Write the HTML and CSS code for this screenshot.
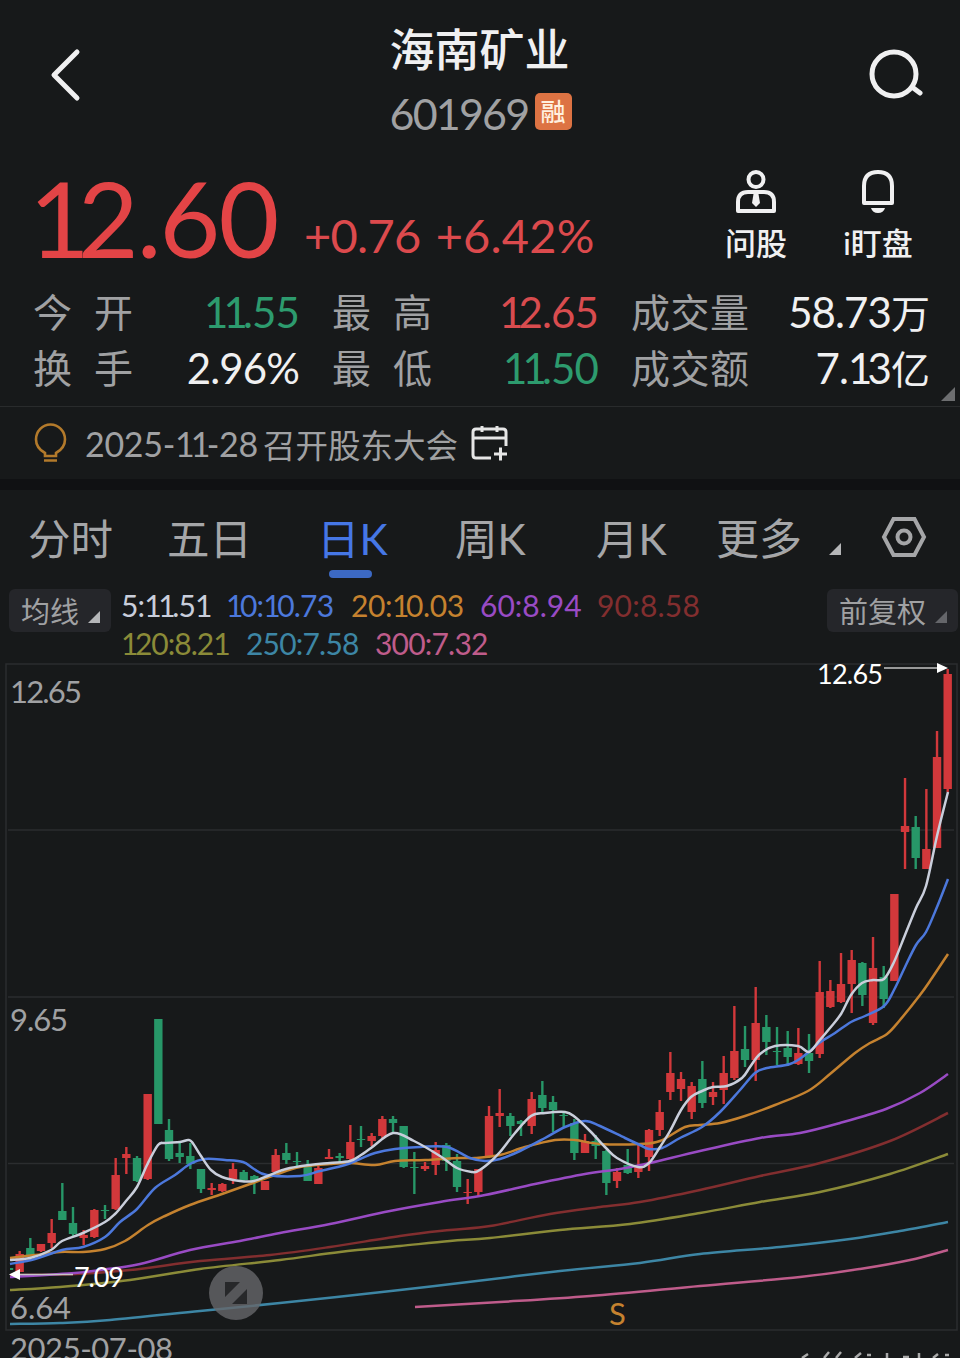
FILE: index.html
```html
<!DOCTYPE html>
<html lang="zh-CN">
<head>
    <meta charset="UTF-8">
    <meta name="viewport" content="width=device-width, initial-scale=1.0">
    <title>海南矿业 601969</title>
    <link rel="stylesheet" href="styles.css">
</head>
<body>

    <header class="header">
        <svg class="back" width="40" height="60" viewBox="0 0 40 60"><path d="M31 7 L8 30 L31 53"/></svg>
        <div class="stock">
            <h1>海南矿业</h1>
            <div class="code"><span class="code-num">601969</span><span class="badge">融</span></div>
        </div>
        <svg class="search" width="60" height="56" viewBox="0 0 60 56"><circle cx="27" cy="27" r="22"/><path d="M45 40 L53 46"/></svg>
    </header>

    <section class="quote">
        <div class="price"><span class="one">1</span>2.60</div>
        <div class="change"><span>+0.76</span><span class="pct">+6.42%</span></div>
        <div class="actions">
            <div class="action">
                <svg width="46" height="46" viewBox="0 0 46 46">
                    <circle cx="23" cy="11.5" r="7.5"/>
                    <path d="M5 43 V34 Q5 24 15 24 H31 Q41 24 41 34 V43 Z"/>
                    <path class="solid" d="M20.5 26 H25.5 L27 35 L23 39 L19 35 Z"/>
                </svg>
                <span>问股</span>
            </div>
            <div class="action">
                <svg width="46" height="46" viewBox="0 0 46 46">
                    <path d="M9 35 V18 Q9 4 23 4 Q37 4 37 18 V35 Z"/>
                    <path class="solid" d="M16 40 H30 Q28.5 45 23 45 Q17.5 45 16 40 Z"/>
                </svg>
                <span>i盯盘</span>
            </div>
        </div>
    </section>

    <section class="stats">
        <div class="label"><i>今</i><i>开</i></div>
        <div class="value down"><span class="one">11</span>.55</div>
        <div class="label"><i>最</i><i>高</i></div>
        <div class="value up"><span class="one">1</span>2.65</div>
        <div class="label"><i>成</i><i>交</i><i>量</i></div>
        <div class="value last">58.73<i>万</i></div>
        <div class="label"><i>换</i><i>手</i></div>
        <div class="value">2.96%</div>
        <div class="label"><i>最</i><i>低</i></div>
        <div class="value down"><span class="one">11</span>.50</div>
        <div class="label"><i>成</i><i>交</i><i>额</i></div>
        <div class="value last">7.<span class="one">1</span>3<i>亿</i></div>
        <span class="corner"></span>
    </section>

    <section class="notice">
        <svg class="bulb" width="34" height="42" viewBox="0 0 34 42"><path d="M11 34 V31 Q2 26 2 17.5 A14.5 15 0 0 1 31 17.5 Q31 26 22 31 V34 Z M10 38.5 H23"/></svg>
        <span class="date">2025-<span class="one">11</span>-28</span>
        <span class="event">召开股东大会</span>
        <svg class="calendar" width="38" height="38" viewBox="0 0 38 38"><path d="M20 34 H5 Q2 34 2 31 V8 Q2 5 5 5 H32 Q35 5 35 8 V22 M2 14 H35 M11 2 V8 M26 2 V8 M23 30 H36 M29.5 23.5 V36.5"/></svg>
    </section>

    <nav class="tabs">
        <span>分时</span>
        <span>五日</span>
        <span class="active">日K</span>
        <span>周K</span>
        <span>月K</span>
        <span class="more">更多</span>
        <svg class="settings" width="46" height="42" viewBox="0 0 46 42"><path d="M12.5 3 H33.5 L43 21 L33.5 39 H12.5 L3 21 Z"/><circle cx="23" cy="21" r="6.5"/></svg>
    </nav>

    <section class="legend">
        <div class="pill">均线</div>
        <div class="averages">
            <div class="line">
                <span class="ma5">5:<span class="one">11</span>.51</span>
                <span class="ma10"><span class="one">1</span>0:<span class="one">1</span>0.73</span>
                <span class="ma20">20:<span class="one">1</span>0.03</span>
                <span class="ma60">60:8.94</span>
                <span class="ma90">90:8.58</span>
            </div>
            <div class="line">
                <span class="ma120"><span class="one">1</span>20:8.21</span>
                <span class="ma250">250:7.58</span>
                <span class="ma300">300:7.32</span>
            </div>
        </div>
        <div class="pill adjust">前复权</div>
    </section>

    <svg class="chart" viewBox="0 662 960 696" width="960" height="696">
        <path class="frame" d="M6 1330 V664 H957 V1330 Z"/>
        <path class="grid" d="M8 830 H954 M8 997 H954 M8 1163.5 H954"/>
        <g id="candles"></g>
        <g id="lines"></g>

        <text class="axis" x="10" y="703" textLength="72">12.65</text>
        <text class="axis" x="10" y="1031" textLength="58">9.65</text>
        <text class="axis" x="10" y="1319" textLength="61">6.64</text>
        <text class="axis" x="10" y="1360" textLength="163">2025-07-08</text>

        <path class="arrow-line" d="M884 668 H938"/>
        <path class="arrow" d="M937 663 L948 668 L937 673 Z"/>
        <text class="mark" x="817" y="684" textLength="66">12.65</text>
        <path class="arrow-line" d="M19 1274.5 H73"/>
        <path class="arrow" d="M20 1269 L9 1274.5 L20 1280 Z"/>
        <text class="mark" x="74" y="1287" textLength="50">7.09</text>

        <circle class="expand" cx="236" cy="1293" r="27"/>
        <path class="expand-icon" d="M225 1282 H240 L225 1297 Z M247 1304 H232 L247 1289 Z"/>
        <text class="signal" x="609" y="1325">S</text>
        <path class="cut-mark" d="M802 1358 L808 1354 M824 1358 L829 1352 M836 1358 L841 1352 M855 1358 L861 1353 M867 1355 H871 M887 1353 V1358 M903 1357 H909 M919 1353 V1358 M933 1358 L938 1354 M945 1355 H949"/>
    </svg>

    <script>
        const NS = 'http://www.w3.org/2000/svg';
        const FIRST_X = 9;
        const STEP = 10.667;

        // one row per day: direction, wick top, body top, body bottom, wick bottom
        const candles = [
            ['g', 1267, 1268, 1270, 1271], ['r', 1251, 1254, 1272, 1272], ['g', 1238, 1248, 1256, 1257], ['r', 1244, 1244, 1251, 1252],
            ['r', 1219, 1233, 1243, 1248], ['g', 1183, 1211, 1220, 1220], ['g', 1207, 1223, 1234, 1236], ['r', 1230, 1235, 1238, 1245],
            ['r', 1209, 1210, 1237, 1238], ['g', 1205, 1210, 1211, 1219], ['r', 1158, 1175, 1209, 1210], ['r', 1147, 1154, 1158, 1174],
            ['g', 1156, 1158, 1181, 1182], ['r', 1094, 1094, 1179, 1180], ['g', 1019, 1019, 1124, 1124], ['g', 1119, 1130, 1159, 1161],
            ['g', 1143, 1153, 1157, 1163], ['g', 1143, 1156, 1164, 1169], ['g', 1169, 1169, 1189, 1193], ['r', 1183, 1188, 1190, 1195],
            ['r', 1183, 1184, 1191, 1192], ['r', 1163, 1169, 1179, 1184], ['g', 1170, 1172, 1180, 1182], ['g', 1175, 1176, 1182, 1194],
            ['r', 1181, 1181, 1190, 1190], ['r', 1149, 1155, 1172, 1173], ['g', 1143, 1153, 1160, 1164], ['g', 1152, 1161, 1162, 1166],
            ['g', 1160, 1165, 1181, 1181], ['r', 1165, 1168, 1184, 1184], ['r', 1149, 1157, 1159, 1159], ['g', 1153, 1156, 1158, 1163],
            ['r', 1125, 1142, 1159, 1160], ['g', 1126, 1139, 1140, 1147], ['r', 1133, 1136, 1141, 1146], ['r', 1116, 1119, 1136, 1138],
            ['g', 1116, 1119, 1123, 1133], ['g', 1126, 1126, 1167, 1168], ['g', 1152, 1167, 1168, 1194], ['r', 1162, 1166, 1169, 1171],
            ['r', 1142, 1150, 1165, 1175], ['g', 1143, 1145, 1161, 1171], ['g', 1154, 1161, 1187, 1192], ['r', 1179, 1192, 1193, 1204],
            ['r', 1169, 1169, 1192, 1196], ['r', 1106, 1116, 1156, 1158], ['r', 1089, 1113, 1116, 1127], ['g', 1113, 1116, 1126, 1136],
            ['g', 1120, 1121, 1124, 1136], ['r', 1092, 1099, 1126, 1134], ['g', 1081, 1095, 1108, 1113], ['g', 1096, 1102, 1110, 1132],
            ['g', 1112, 1115, 1116, 1127], ['g', 1119, 1123, 1153, 1160], ['r', 1134, 1141, 1153, 1153], ['g', 1135, 1141, 1146, 1159],
            ['g', 1150, 1151, 1183, 1195], ['r', 1168, 1172, 1181, 1188], ['g', 1149, 1165, 1173, 1174], ['r', 1145, 1166, 1172, 1178],
            ['r', 1129, 1130, 1157, 1171], ['r', 1100, 1112, 1130, 1136], ['r', 1052, 1073, 1092, 1100], ['r', 1072, 1079, 1089, 1101],
            ['r', 1082, 1086, 1112, 1119], ['g', 1061, 1079, 1103, 1108], ['r', 1082, 1092, 1097, 1105], ['r', 1056, 1073, 1090, 1104],
            ['r', 1006, 1051, 1078, 1080], ['g', 1026, 1049, 1060, 1067], ['r', 987, 1023, 1060, 1081], ['g', 1015, 1027, 1042, 1055],
            ['g', 1027, 1051, 1052, 1065], ['g', 1031, 1048, 1057, 1066], ['r', 1028, 1053, 1064, 1065], ['g', 1034, 1053, 1061, 1073],
            ['r', 961, 992, 1054, 1058], ['r', 980, 991, 1007, 1008], ['r', 953, 984, 1002, 1003], ['r', 950, 960, 984, 1013],
            ['g', 962, 963, 995, 1006], ['r', 937, 968, 1023, 1025], ['g', 966, 977, 999, 1008], ['r', 894, 894, 981, 981],
            ['r', 778, 826, 832, 869], ['g', 816, 827, 858, 869], ['r', 789, 849, 869, 869], ['r', 731, 757, 848, 848],
            ['r', 669, 674, 789, 792]
        ];

        const averages = {
            ma300: [[415,1307],[500,1302],[590,1296],[700,1286],[800,1277],[860,1269],[910,1260],[948,1250]],
            ma250: [[10,1324],[60,1323],[110,1320],[200,1311],[280,1303],[400,1290],[460,1283],[560,1271],[640,1263],[700,1254],[780,1247],[850,1239],[900,1231],[948,1222]],
            ma120: [[10,1290],[60,1287],[130,1280],[200,1269],[280,1260],[340,1252],[400,1246],[450,1241],[490,1238],[560,1230],[630,1224],[700,1213],[760,1202],[820,1192],[890,1174],[948,1154]],
            ma90: [[10,1275],[75,1274],[130,1270],[200,1261],[270,1255],[330,1247],[400,1236],[450,1230],[490,1226],[550,1214],[600,1207],[640,1202],[700,1190],[760,1176],[820,1163],[890,1141],[948,1113]],
            ma60: [[10,1277],[75,1273],[100,1270],[140,1264],[190,1250],[240,1241],[280,1233],[330,1224],[390,1211],[440,1202],[485,1195],[535,1184],[585,1174],[620,1169],[650,1163],[700,1151],[760,1138],[800,1133],[840,1123],[886,1109],[920,1093],[948,1074]],
            ma20: [[10,1258],[35,1255],[60,1252],[83,1252],[105,1249],[125,1241],[148,1225],[165,1216],[190,1205],[222,1194],[250,1184],[275,1175],[300,1167],[330,1164],[350,1163],[375,1165],[395,1161],[425,1160],[460,1158],[475,1158],[500,1155],[525,1147],[555,1140],[575,1140],[600,1144],[640,1144],[660,1141],[685,1127],[700,1125],[720,1123],[745,1116],[775,1105],[808,1091],[830,1074],[855,1053],[870,1043],[887,1034],[900,1020],[920,995],[932,978],[948,954]],
            ma10: [[10,1264],[35,1259],[62,1250],[83,1247],[105,1237],[120,1222],[137,1209],[155,1188],[175,1175],[190,1164],[205,1159],[225,1160],[243,1162],[254,1169],[267,1175],[300,1176],[320,1171],[345,1165],[360,1159],[375,1153],[395,1149],[420,1147],[447,1147],[470,1158],[485,1161],[500,1159],[520,1151],[545,1138],[565,1127],[585,1121],[600,1126],[625,1138],[640,1145],[649,1149],[662,1148],[680,1138],[702,1127],[720,1112],[740,1090],[755,1073],[767,1068],[790,1064],[805,1055],[819,1043],[835,1033],[851,1022],[865,1016],[884,1006],[894,990],[905,967],[916,945],[926,932],[937,907],[948,879]],
            ma5: [[10,1260],[30,1258],[51,1250],[62,1241],[83,1233],[105,1222],[115,1214],[126,1201],[137,1187],[147,1165],[158,1145],[165,1143],[180,1142],[188,1140],[192,1142],[201,1156],[211,1170],[222,1177],[240,1181],[254,1181],[270,1175],[286,1169],[310,1165],[330,1163],[350,1161],[361,1155],[371,1148],[393,1133],[414,1141],[440,1156],[457,1168],[472,1172],[478,1171],[489,1163],[500,1152],[515,1133],[531,1116],[545,1113],[565,1112],[575,1117],[590,1131],[606,1148],[617,1158],[638,1167],[649,1163],[660,1147],[670,1131],[681,1110],[691,1097],[702,1091],[713,1087],[727,1086],[742,1078],[750,1067],[760,1054],[775,1046],[798,1046],[809,1052],[819,1041],[830,1028],[841,1014],[851,995],[862,983],[873,980],[884,979],[894,962],[905,935],[916,908],[926,886],[937,836],[948,792]]
        };

        function addPath(parent, d, className) {
            const path = document.createElementNS(NS, 'path');
            path.setAttribute('d', d);
            path.setAttribute('class', className);
            parent.appendChild(path);
        }

        function smooth(points) {
            let d = `M${points[0]}`;
            for (let i = 0; i < points.length - 1; i++) {
                const p0 = points[i - 1] || points[i];
                const p1 = points[i];
                const p2 = points[i + 1];
                const p3 = points[i + 2] || p2;
                d += ` C${p1[0] + (p2[0] - p0[0]) / 6} ${p1[1] + (p2[1] - p0[1]) / 6}`;
                d += ` ${p2[0] - (p3[0] - p1[0]) / 6} ${p2[1] - (p3[1] - p1[1]) / 6} ${p2[0]} ${p2[1]}`;
            }
            return d;
        }

        const candleGroup = document.getElementById('candles');
        candles.forEach(([dir, high, top, bottom, low], i) => {
            const x = FIRST_X + i * STEP;
            // the first day is half outside the plot area
            const left = Math.max(x - 4.2, 10);
            const right = x + 4.2;
            if (i > 0) {
                addPath(candleGroup, `M${x - 1.2} ${high} H${x + 1.2} V${low} H${x - 1.2} Z`, dir);
            }
            addPath(candleGroup, `M${left} ${top} H${right} V${bottom} H${left} Z`, dir);
        });

        const lineGroup = document.getElementById('lines');
        Object.keys(averages).forEach(name => addPath(lineGroup, smooth(averages[name]), name));
    </script>

</body>
</html>
```
FILE: styles.css
```css
* {
    box-sizing: border-box;
}

body {
    margin: 0;
    width: 960px;
    height: 1358px;
    overflow: hidden;
    background: #17191a;
    color: #f0f0f1;
    font-family: Lato, "Noto Sans CJK SC", sans-serif;
}

svg {
    display: block;
    flex: none;
    fill: none;
}

i {
    font-style: normal;
}

/* pull the neighbours closer to the narrow digit */
.one {
    letter-spacing: -0.115em;
}

/* Header */
.header {
    display: flex;
    justify-content: space-between;
    height: 154px;
    padding: 20px 33px 0 46px;
}

.back {
    margin-top: 25px;
    stroke: #f0f0f1;
    stroke-width: 5;
    stroke-linecap: round;
    stroke-linejoin: round;
}

.search {
    margin-top: 27px;
    stroke: #f0f0f1;
    stroke-width: 5;
    stroke-linecap: round;
}

.stock {
    width: 184px;
    margin-left: 10px;
}

h1 {
    margin: 0;
    font-size: 45px;
    font-weight: 500;
    line-height: 61px;
    white-space: nowrap;
}

.code {
    display: flex;
    align-items: center;
    height: 64px;
    color: #a0a1a3;
}

.code-num {
    width: 145px;
    font-size: 43px;
    letter-spacing: -1.8px;
}

.badge {
    flex: none;
    width: 37px;
    height: 37px;
    margin-top: -3px;
    border-radius: 5px;
    background: #dd7343;
    color: #fff0df;
    font-size: 25px;
    font-weight: 500;
    line-height: 36px;
    text-align: center;
}

/* Price */
.quote {
    display: flex;
    height: 130px;
    padding-left: 29px;
    color: #e34446;
}

.price {
    width: 275px;
    font-size: 105px;
    line-height: 126px;
    letter-spacing: -2px;
}

.change {
    width: 412px;
    padding-top: 53px;
    font-size: 47px;
    line-height: 56px;
    letter-spacing: -0.7px;
    color: #dc4a4d;
}

.pct {
    margin-left: 15px;
    letter-spacing: 0.2px;
}

.actions {
    display: flex;
    gap: 42px;
    padding-top: 14px;
    color: #f0f0f1;
}

.action {
    display: flex;
    flex-direction: column;
    align-items: center;
    width: 80px;
    font-size: 31px;
    font-weight: 500;
    line-height: 58px;
    white-space: nowrap;
}

.action svg {
    stroke: #f0f0f1;
    stroke-width: 4;
    stroke-linejoin: round;
}

.action .solid {
    fill: #f0f0f1;
    stroke: none;
}

/* Stats */
.stats {
    position: relative;
    display: grid;
    grid-template-columns: 100px 199px 100px 199px 118px 181px;
    grid-template-rows: 56px 56px;
    height: 123px;
    padding-left: 33px;
    border-bottom: 1px solid #292b2c;
    font-size: 39px;
    line-height: 57px;
}

.label {
    display: flex;
    justify-content: space-between;
    color: #a0a1a3;
}

.value {
    padding-right: 33px;
    text-align: right;
    font-size: 42px;
    letter-spacing: -0.9px;
    white-space: nowrap;
}

.value i {
    font-size: 39px;
    letter-spacing: 0;
}

.last {
    padding-right: 0;
}

.up {
    color: #d94c4f;
}

.down {
    color: #2d9b6e;
}

.corner {
    position: absolute;
    right: 5px;
    bottom: 5px;
    border-left: 14px solid transparent;
    border-bottom: 14px solid #6d6e70;
}

/* Notice */
.notice {
    display: flex;
    align-items: center;
    height: 83px;
    padding-left: 34px;
    border-bottom: 11px solid #101113;
    color: #a0a1a3;
    font-size: 34px;
    white-space: nowrap;
}

.bulb {
    stroke: #b37a2b;
    stroke-width: 2.6;
}

.date {
    width: 178px;
    margin-left: 17px;
    letter-spacing: -0.3px;
}

.event {
    width: 208px;
    font-size: 32.5px;
}

.calendar {
    stroke: #e6e6e6;
    stroke-width: 3;
}

/* Period tabs */
.tabs {
    display: grid;
    grid-template-columns: 139px 150px 138px 141px 120px 165px 46px;
    align-items: center;
    height: 97px;
    padding-left: 28px;
    color: #a5a6a8;
    font-size: 42.5px;
    line-height: 97px;
}

.active {
    color: #4677e6;
}

.active::after {
    content: "";
    display: block;
    width: 43px;
    height: 8px;
    margin: -17px 0 9px 12px;
    border-radius: 4px;
    background: #3c69c4;
}

.more {
    font-size: 43px;
}

.more::after {
    content: "";
    display: inline-block;
    margin-left: 27px;
    border-left: 12px solid transparent;
    border-bottom: 12px solid #b5b6b8;
}

.settings {
    margin-top: -3px;
    stroke: #a5a6a8;
    stroke-width: 4;
}

/* Moving averages */
.legend {
    display: flex;
    height: 75px;
    font-size: 30px;
}

.pill {
    flex: none;
    width: 102px;
    height: 43px;
    margin: 2px 0 0 9px;
    padding-left: 12px;
    border-radius: 6px;
    background: #25262a;
    color: #a0a1a3;
    font-size: 29px;
    line-height: 45px;
    white-space: nowrap;
}

.pill::after {
    content: "";
    display: inline-block;
    margin-left: 9px;
    border-left: 12px solid transparent;
    border-bottom: 12px solid #b5b6b8;
}

.adjust {
    width: 131px;
    margin-left: 0;
}

.adjust::after {
    border-bottom-color: #65666a;
}

.averages {
    flex: none;
    width: 716px;
    padding-left: 10px;
}

.line {
    display: flex;
    height: 38px;
    line-height: 36px;
    letter-spacing: -0.8px;
}

.line .ma5 { width: 105px; }
.line .ma10 { width: 125px; }
.line .ma20 { width: 129px; letter-spacing: -0.4px; }
.line .ma60 { width: 117px; letter-spacing: 0; }
.line .ma90 { letter-spacing: 0.2px; }
.line .ma120 { width: 125px; letter-spacing: -1px; }
.line .ma250 { width: 129px; }

.ma5 { color: #c9cedb; stroke: #c9cedb; }
.ma10 { color: #4c78dc; stroke: #4c78dc; }
.ma20 { color: #c5822f; stroke: #c5822f; }
.ma60 { color: #994bc4; stroke: #994bc4; }
.ma90 { color: #822e2f; stroke: #822e2f; }
.ma120 { color: #8b8b38; stroke: #8b8b38; }
.ma250 { color: #3d86a5; stroke: #3d86a5; }
.ma300 { color: #bf5c8b; stroke: #bf5c8b; }

/* Chart */
.frame, .grid {
    stroke: #2b2d2f;
    stroke-width: 1.5;
}

.r { fill: #d2383b; }
.g { fill: #279768; }

#lines path {
    stroke-width: 2.5;
    stroke-linejoin: round;
}

.axis {
    fill: #a0a1a3;
    font-size: 31px;
}

.mark {
    fill: #fff;
    font-size: 27px;
}

.arrow {
    fill: #fff;
}

.arrow-line {
    stroke: #c5c5c5;
    stroke-width: 1.5;
}

.expand {
    fill: #66676a;
    fill-opacity: 0.8;
}

.expand-icon {
    fill: #27282a;
}

.signal {
    fill: #c5822f;
    font-size: 31px;
}

.cut-mark {
    stroke: #aaa;
    stroke-width: 2.5;
}
```
